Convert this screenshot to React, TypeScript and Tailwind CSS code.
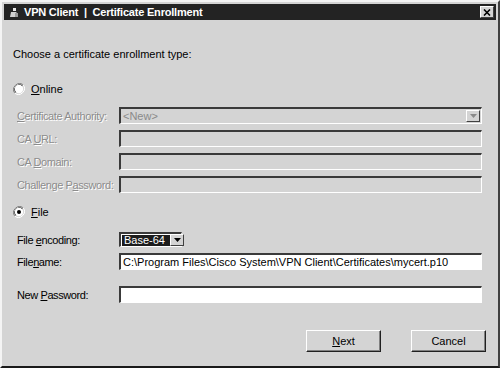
import React from "react";

const font = { fontFamily: '"Liberation Sans", Arial, sans-serif' };

function Radio({ checked }: { checked?: boolean }) {
  return (
    <svg width="12" height="12" viewBox="0 0 12 12" className="shrink-0">
      <path d="M10.2 1.8 A6 6 0 0 0 1.8 10.2" fill="none" stroke="#808080" strokeWidth="1" />
      <path d="M9.4 2.6 A4.9 4.9 0 0 0 2.6 9.4" fill="none" stroke="#202020" strokeWidth="1" />
      <path d="M1.8 10.2 A6 6 0 0 0 10.2 1.8" fill="none" stroke="#ffffff" strokeWidth="1" />
      <circle cx="6" cy="6" r="4.2" fill="#ffffff" />
      {checked && <circle cx="6" cy="6" r="2" fill="#000000" />}
    </svg>
  );
}

function Field({ disabled, value, children }: { disabled?: boolean; value?: string; children?: React.ReactNode }) {
  return (
    <div
      className={`flex h-[17px] w-[363px] shrink-0 items-center border-t-2 border-l-2 border-t-[#3a3a3a] border-l-[#3a3a3a] border-b border-r border-b-white border-r-white ${disabled ? "bg-[#d4d4d4]" : "bg-white"}`}
    >
      <span className={`flex-1 truncate whitespace-nowrap pl-[2px] text-[11px] leading-none ${disabled ? "text-[#8a8a8a]" : "text-black"}`}>{value}</span>
      {children}
    </div>
  );
}

function ArrowBtn({ faded }: { faded?: boolean }) {
  return (
    <div className="mr-[1px] flex h-[12px] w-[14px] shrink-0 items-center justify-center border border-t-white border-l-white border-b-[#404040] border-r-[#404040] bg-[#d4d4d4]">
      <svg width="7" height="4" viewBox="0 0 7 4">
        <path d="M0 0 H7 L3.5 4 Z" fill={faded ? "#8a8a8a" : "#000"} />
      </svg>
    </div>
  );
}

function Row({ label, children, disabled, className = "" }: { label: React.ReactNode; children: React.ReactNode; disabled?: boolean; className?: string }) {
  return (
    <div className={`flex items-center ${className}`}>
      <span
        className={`w-[102px] shrink-0 whitespace-nowrap text-[11px] leading-[14px] tracking-[-0.4px] ${disabled ? "text-[#8c8c8c] [text-shadow:1px_1px_0_#ffffff]" : "text-black"}`}
      >
        {label}
      </span>
      {children}
    </div>
  );
}

function Button({ children }: { children: React.ReactNode }) {
  return (
    <div className="flex h-[22px] w-[75px] items-center justify-center border border-t-white border-l-white border-b-[#202020] border-r-[#202020] bg-[#d4d4d4] text-[11px] leading-[14px] shadow-[inset_-1px_-1px_0_#808080]">
      {children}
    </div>
  );
}

export default function App() {
  return (
    <div className="h-[368px] w-[500px] overflow-hidden bg-[#d4d4d4]" style={font}>
      <div className="flex h-full flex-col border-2 border-l-[#f4f4f4] border-t-[#f4f4f4] border-r-[#404040] border-b-[#1a1a1a] px-[2px] pt-[2px]">
        {/* Title bar */}
        <div className="flex h-[16px] shrink-0 items-center bg-[#232323] pl-[5px] pr-[2px]">
          <svg width="11" height="11" viewBox="0 0 11 11" className="mr-[4px]">
            <path d="M4 1 h3 v3 h-3 Z" fill="#e8e8e8" />
            <path d="M2 5 h5 l2 2 v3 h-8 Z" fill="#d0d0d0" />
            <path d="M6 6 h3 v4 h-3 Z" fill="#9a9a9a" />
          </svg>
          <span className="whitespace-nowrap text-[11px] font-bold tracking-[-0.2px] text-white">VPN Client&nbsp;&nbsp;|&nbsp;&nbsp;Certificate Enrollment</span>
          <div className="ml-auto flex h-[12px] w-[14px] items-center justify-center border border-t-white border-l-white border-b-[#404040] border-r-[#404040] bg-[#d4d4d4]">
            <svg width="8" height="7" viewBox="0 0 8 7">
              <path d="M1 0.5 L7 6.5 M7 0.5 L1 6.5" stroke="#000" strokeWidth="1.6" />
            </svg>
          </div>
        </div>

        <div className="flex flex-1 flex-col pl-[9px]">
          <div className="mt-[27px] text-[11px] leading-[14px]">Choose a certificate enrollment type:</div>

          <div className="mt-[21px] flex items-center gap-[6px] text-[11px] leading-[14px]">
            <Radio />
            <span><u>O</u>nline</span>
          </div>

          <div className="mt-[11px] flex flex-col gap-[6px] pl-[4px]">
            <Row disabled label={<><u>C</u>ertificate Authority:</>}>
              <Field disabled value="<New>">
                <ArrowBtn faded />
              </Field>
            </Row>
            <Row disabled label={<>CA <u>U</u>RL:</>}>
              <Field disabled />
            </Row>
            <Row disabled label={<>CA <u>D</u>omain:</>}>
              <Field disabled />
            </Row>
            <Row disabled label={<>Challenge P<u>a</u>ssword:</>}>
              <Field disabled />
            </Row>
          </div>

          <div className="mt-[12px] flex items-center gap-[6px] text-[11px] leading-[14px]">
            <Radio checked />
            <span><u>F</u>ile</span>
          </div>

          <div className="mt-[13px] flex flex-col pl-[4px]">
            <Row label={<>File <u>e</u>ncoding:</>}>
              <div className="flex h-[15px] w-[63px] shrink-0 items-center border-t-2 border-l-2 border-t-[#3a3a3a] border-l-[#3a3a3a] border-b border-r border-b-white border-r-white bg-white">
                <span className="ml-[1px] whitespace-nowrap bg-[#1c1c1c] px-[2px] text-[11px] leading-[11px] text-white">Base-64&nbsp;</span>
                <div className="ml-auto">
                  <ArrowBtn />
                </div>
              </div>
            </Row>
            <Row className="mt-[6px]" label={<>File<u>n</u>ame:</>}>
              <Field value="C:\Program Files\Cisco System\VPN Client\Certificates\mycert.p10" />
            </Row>
            <Row className="mt-[16px]" label={<>New <u>P</u>assword:</>}>
              <Field />
            </Row>
          </div>

          <div className="mt-[27px] flex justify-end gap-[30px] pr-[10px]">
            <Button><span><u>N</u>ext</span></Button>
            <Button>Cancel</Button>
          </div>
        </div>
      </div>
    </div>
  );
}
